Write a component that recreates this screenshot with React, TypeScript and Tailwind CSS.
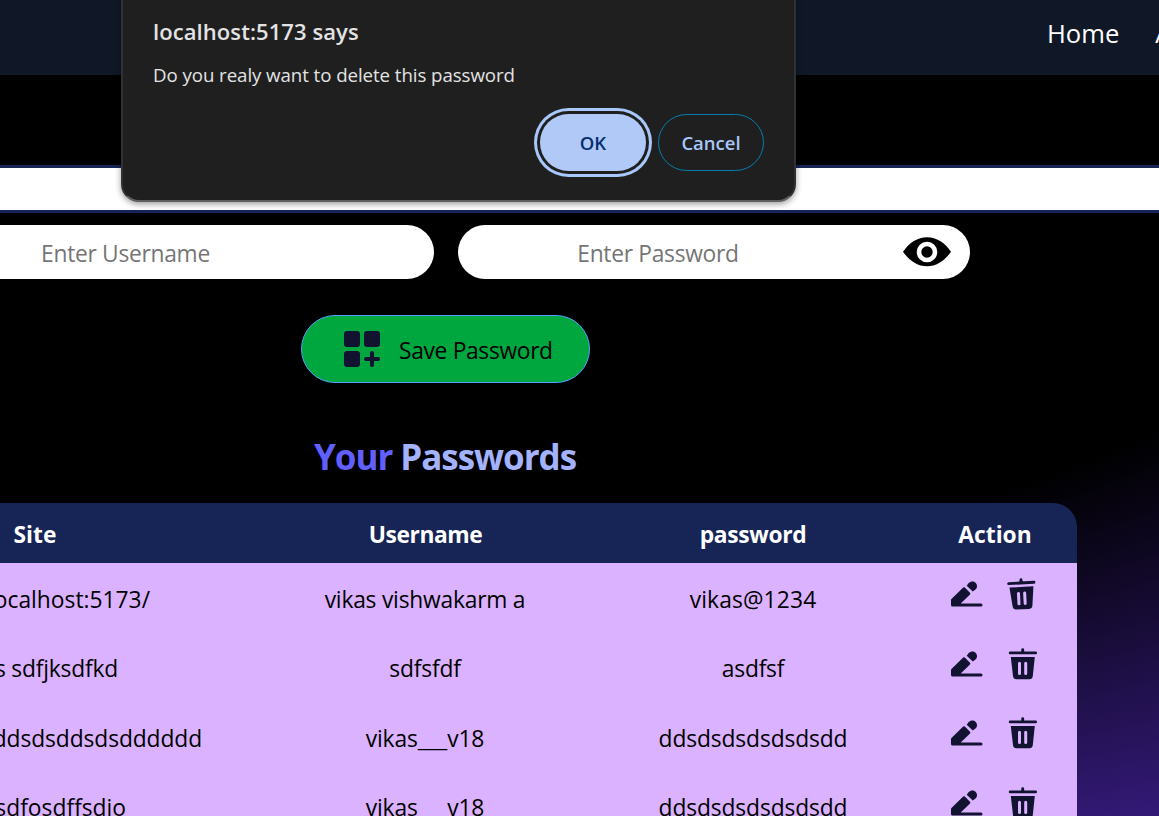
const rows = [
  { site: "http://localhost:5173/", pad: "pr-[107px]", user: "vikas vishwakarm a", userTracking: "tracking-[-0.22px]", password: "vikas@1234", passTracking: "tracking-[0.15px]" },
  { site: "vikas sdfjksdfkd", pad: "pr-[139px] tracking-[-0.2px]", user: "sdfsfdf", userTracking: "tracking-[-0.15px]", password: "asdfsf", passTracking: "tracking-[-0.2px]" },
  { site: "ddsddsdsddsdsdddddd", pad: "pr-[55px] tracking-[-0.1px]", user: "vikas___v18", userTracking: "tracking-[-0.15px]", password: "ddsdsdsdsdsdsdd", passTracking: "tracking-[-0.13px]" },
  { site: "sdfsdfosdffsdio", pad: "pr-[131px]", user: "vikas___v18", userTracking: "tracking-[-0.15px]", password: "ddsdsdsdsdsdsdd", passTracking: "tracking-[-0.13px]" },
];

function EyeIcon() {
  return (
    <svg width="48" height="30" viewBox="0 0 48 30" className="block">
      <path d="M0 14.7C6.500 5.500 14.500 .3 24 .3s17.500 5.200 24 14.400C41.500 23.900 33.500 29.200 24 29.200S6.500 23.900 0 14.700Z" fill="#000" />
      <circle cx="24" cy="15" r="8" fill="none" stroke="#fff" strokeWidth="4.600" />
    </svg>
  );
}

function AddGridIcon() {
  return (
    <svg width="36" height="36" viewBox="0 0 36 36" fill="#121331" className="block">
      <rect width="16" height="16" rx="3" />
      <rect x="20" width="16" height="16" rx="3" />
      <rect y="20" width="16" height="16" rx="3" />
      <path d="M28 22v12M22 28h12" stroke="#121331" strokeWidth="4" strokeLinecap="round" />
    </svg>
  );
}

function PencilIcon() {
  return (
    <svg width="32" height="26" viewBox="0 0 32 26" fill="#121331" className="block">
      <path d="M.2 18.200 12.200 6.600q.8-.8 1.600 0l5.200 5.200q.8.8 0 1.600L9.700 22.400H30a1.500 1.500 0 0 1 0 3H1.500Q0 25.400 0 23.900V19.100Q0 18.500 .2 18.200Z" />
      <path d="m15.700 4.700 2-2.600C19.700-.1 22.700-.1 24.500 1.700s2.200 4.700 0 6.900l-2.700 1.900Z" />
    </svg>
  );
}

function TrashIcon({ tilted }: { tilted: boolean }) {
  return (
    <svg width="29" height="32" viewBox="0 0 29 32" className="block overflow-visible">
      <g transform={tilted ? "rotate(-3 14 16) translate(-1.500 0)" : "translate(-0.500 0)"} fill="#121331">
        <path d="M14.200 1.700v3M1.700 4.900h25.400" stroke="#121331" strokeWidth="2.900" strokeLinecap="round" />
        <path fillRule="evenodd" d="M2.300 8.900H26.300L24.300 28q-.4 3.200-3.500 3.200H8q-3.100 0-3.500-3.200ZM9.500 15.200v10.400a1.500 1.500 0 0 0 3 0V15.200a1.500 1.500 0 0 0-3 0Zm6.200 0v10.400a1.500 1.500 0 0 0 3 0V15.200a1.500 1.500 0 0 0-3 0Z" />
      </g>
    </svg>
  );
}

function ConfirmDialog() {
  return (
    <div className="absolute left-[121px] top-[-20px] z-10 flex h-[222px] w-[675px] flex-col rounded-[18px] border-2 border-[#303134] border-b-[#5e5e5e] bg-[#1f1f1f] pl-[30px] pr-[30px] pt-[33px] text-[#e3e3e3] shadow-[0_2px_6px_rgba(0,0,0,0.4)]">
      <h2 className="h-[32px] text-[22px] font-semibold leading-[32px] tracking-[0.08px]">localhost:5173 says</h2>
      <p className="mt-[14px] h-[28px] text-[18.7px] leading-[28px] tracking-[-0.07px]">Do you realy want to delete this password</p>
      <div className="mt-[25px] flex justify-end gap-[12px] text-[18.5px] font-semibold">
        <button className="h-[57px] w-[106px] rounded-full bg-[#b0c9f6] pt-px text-[#062e6f] shadow-[0_0_0_3px_#1f1f1f,0_0_0_6px_#a8c7fa]">OK</button>
        <button className="h-[57px] w-[106px] rounded-full border border-[#087cae] pt-px text-[#a8c7fa]">Cancel</button>
      </div>
    </div>
  );
}

export default function App() {
  return (
    <div className="relative h-[816px] w-[1159px] overflow-hidden whitespace-nowrap bg-black font-['Open_Sans',sans-serif] text-[22.8px] text-black">
      <div className="h-full bg-[radial-gradient(2400px_1057px_at_445px_144px,#000_40%,#6633ee_100%)]">
        <nav className="flex h-[75px] items-center gap-[36px] bg-[#101828] pb-[7px] pl-[1047px] text-[25.600px] text-white">
          <a>Home</a>
          <a>About</a>
        </nav>
        <main className="pt-[90px]">
          <div className="h-[48px] border-y-[3px] border-[#162456] bg-white" />
          <div className="-ml-[183px] mt-[12px] flex w-[1153px] gap-[24px] tracking-[-0.3px] text-[#757575]">
            <div className="flex h-[54px] w-[617px] items-center justify-center rounded-full bg-white pt-[5px]">Enter Username</div>
            <div className="flex h-[54px] w-[512px] items-center rounded-full bg-white pr-[19px]">
              <span className="flex-1 pr-[45px] pt-[5px] text-center">Enter Password</span>
              <EyeIcon />
            </div>
          </div>
          <button className="ml-[301px] mt-[36px] flex h-[68px] w-[289px] items-center gap-[19px] rounded-full border border-[#51a2ff] bg-[#00a63e] pl-[42px]">
            <AddGridIcon />
            <span className="pt-[5px] tracking-[-0.33px]">Save Password</span>
          </button>
          <h1 className="-ml-[187px] mt-[49px] h-[51px] w-[1264px] text-center text-[35px] font-bold leading-[50px] tracking-[-1.03px] text-[#a3b3ff]">
            <span className="text-[#615fff]">Your</span> Passwords
          </h1>
          <section className="-ml-[187px] mt-[20px] w-[1264px] text-center">
            <header className="grid h-[60px] grid-cols-[444px_336px_320px_164px] items-center rounded-t-[24px] bg-[#162456] pt-[5px] font-bold text-white">
              <span>Site</span>
              <span className="pl-px tracking-[-0.45px]">Username</span>
              <span className="tracking-[-0.35px]">password</span>
              <span>Action</span>
            </header>
            {rows.map((row, i) => (
              <div key={i} className="grid h-[69.5px] grid-cols-[444px_336px_320px_164px] items-center bg-[#dab2ff]">
                <span className={`flex justify-end pt-[4px] ${row.pad}`}>{row.site}</span>
                <span className={`pt-[4px] ${row.userTracking}`}>{row.user}</span>
                <span className={`pt-[4px] ${row.passTracking}`}>{row.password}</span>
                <span className="flex items-center gap-[26px] pb-[7px] pl-[38px]">
                  <PencilIcon />
                  <TrashIcon tilted={i === 0} />
                </span>
              </div>
            ))}
          </section>
        </main>
      </div>
      <ConfirmDialog />
    </div>
  );
}
